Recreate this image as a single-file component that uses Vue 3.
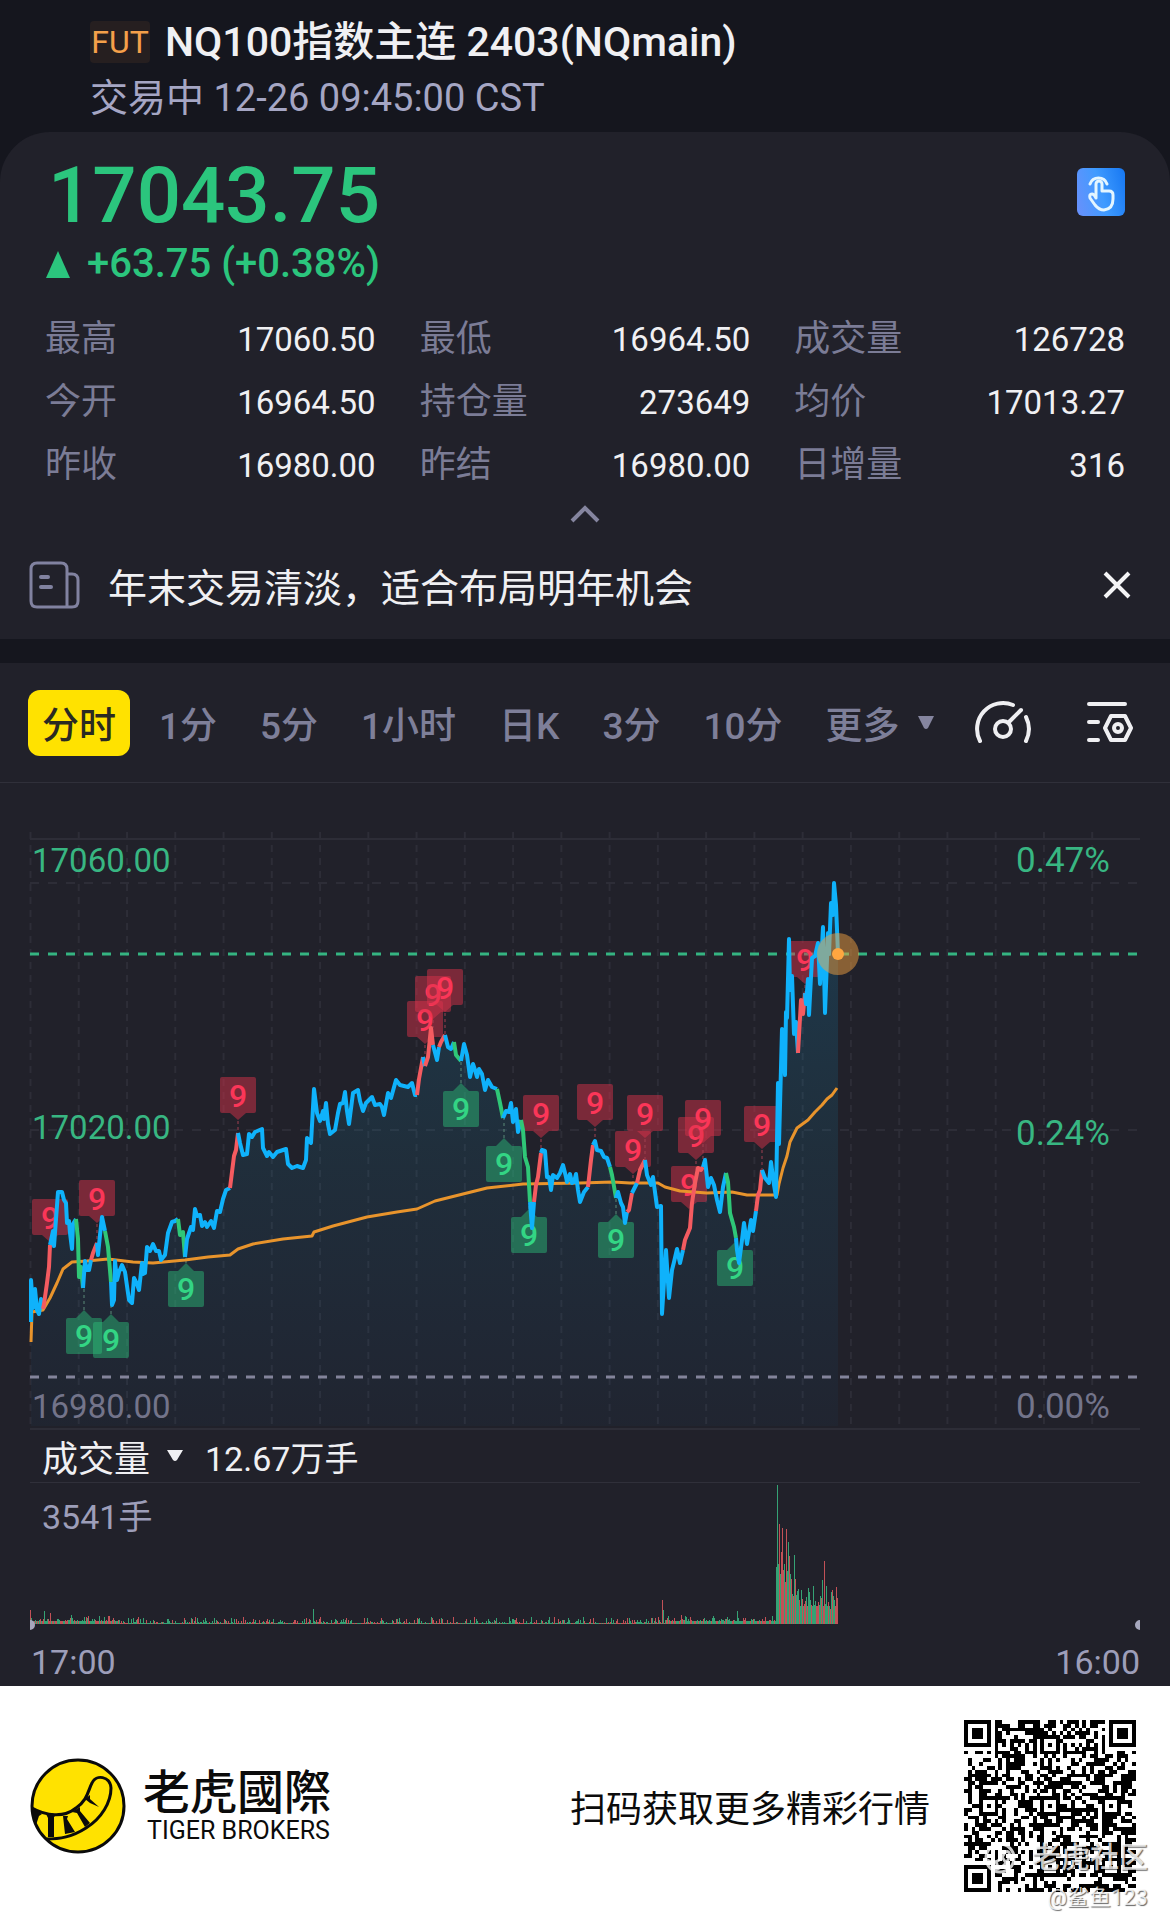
<script setup>
const stats = [
  ['最高', '17060.50'], ['最低', '16964.50'], ['成交量', '126728'],
  ['今开', '16964.50'], ['持仓量', '273649'], ['均价', '17013.27'],
  ['昨收', '16980.00'], ['昨结', '16980.00'], ['日增量', '316'],
]

const periods = ['分时', '1分', '5分', '1小时', '日K', '3分', '10分']

// Price track, split where the trend colour changes: b = neutral, r = rising run, g = falling run
const track = [
  ['b', '31,1322 31,1280 33,1308 35,1289 37,1310 39,1314 41,1299 43,1309'],
  ['r', '44,1304 47,1283 49,1267 50,1245'],
  ['b', '53,1231 54,1246 56,1219 58,1192 62,1192 64,1200 66,1203 67,1223 69,1221 70,1233 72,1249 73,1224 76,1219'],
  ['g', '78,1239 79,1277 81,1267 83,1288'],
  ['b', '85,1261 87,1270 89,1270 91,1260'],
  ['r', '93,1253 97,1243'],
  ['b', '98,1255 100,1235 102,1217 105,1231'],
  ['g', '108,1247 111,1282'],
  ['b', '112,1305 114,1300 115,1261 117,1280 119,1272 122,1265 125,1272 127,1286 129,1300 132,1303 134,1278 137,1284 139,1290 142,1263 143,1274 145,1273 147,1247 150,1251 153,1244 156,1251 159,1251 161,1260 165,1255 168,1233 172,1222 175,1221 178,1219'],
  ['g', '180,1235 183,1232 185,1257'],
  ['b', '187,1239 191,1227 193,1230 195,1209 197,1216 200,1215 202,1226 205,1222 207,1227 211,1221 214,1228 217,1211 220,1212 223,1199 226,1190 230,1188'],
  ['r', '232,1172 234,1156 236,1150 238,1133'],
  ['b', '240,1143 243,1155 247,1154 249,1134 252,1137 255,1132 262,1129 263,1148 267,1156 269,1152 273,1157 277,1152 286,1149 288,1164 292,1168 297,1166 303,1168 306,1160 307,1138 311,1143 314,1089 317,1113 320,1121 323,1111 324,1119 326,1103 328,1124 330,1134 335,1130 338,1113 340,1104 343,1103 345,1092 347,1111 349,1124 353,1093 358,1090 360,1101 363,1111 366,1103 372,1097 375,1105 380,1104 382,1107 384,1115 388,1093 391,1098 396,1080 400,1085 408,1087 412,1083 415,1095 417,1095'],
  ['r', '419,1079 423,1057'],
  ['b', '425,1066'],
  ['r', '428,1057 431,1028 433,1045'],
  ['b', '437,1060 439,1047'],
  ['r', '441,1042 445,1035'],
  ['b', '448,1047 451,1049 454,1042'],
  ['g', '456,1055 461,1061'],
  ['b', '464,1044 467,1055 470,1077 473,1064 475,1070 477,1077 479,1069 482,1074 485,1090 488,1080 492,1087 497,1089'],
  ['g', '500,1103 503,1118'],
  ['b', '506,1111 509,1112 511,1103 513,1122 516,1109 518,1132 521,1120'],
  ['g', '523,1130 525,1157 528,1167 530,1202'],
  ['b', '532,1228 534,1202'],
  ['r', '536,1185 538,1177 541,1153'],
  ['b', '542,1150 545,1151 547,1177 549,1177 551,1190 553,1175 557,1178 560,1173 563,1165 566,1177 567,1182 570,1174 572,1183 574,1182 576,1174 578,1190 580,1202 584,1192 588,1187'],
  ['r', '591,1160 593,1145'],
  ['b', '595,1141 597,1150 601,1151 604,1157 607,1158 610,1167'],
  ['g', '612,1175 616,1198'],
  ['b', '618,1192 621,1203 623,1207 625,1223 627,1212'],
  ['r', '629,1210 632,1193'],
  ['b', '635,1187 637,1183'],
  ['r', '640,1170 645,1160'],
  ['b', '647,1175 651,1185 653,1177 657,1207 661,1206 662,1314 666,1250 669,1298 672,1270 674,1262 677,1249 680,1263 683,1250'],
  ['r', '685,1240 690,1228 692,1203 695,1183 698,1168 701,1170 703,1167'],
  ['b', '705,1160 708,1187 711,1178 714,1185 717,1200 720,1212 723,1187 726,1173'],
  ['g', '728,1182 730,1213 734,1227 736,1238'],
  ['b', '737,1250 739,1263 742,1240 744,1223 747,1244 751,1220 753,1231 756,1211'],
  ['r', '758,1195 760,1190 762,1170'],
  ['b', '765,1178 769,1183 771,1162 774,1185 776,1197 778,1083 779,1144 782,1029 785,1075 786,1012 787,1018 789,939 790,990 792,976 794,1034 796,1022 798,1053'],
  ['r', '800,1018 801,1000 803,1014 805,993'],
  ['b', '806,1004 808,979 809,1015 812,958 815,956 818,943 820,984 823,927 825,1013 828,933 829,954 831,903 833,915 834,883 836,905 838,954'],
]
const segments = track.map(([tone, pts], i) => ({
  tone,
  points: i ? track[i - 1][1].split(' ').pop() + ' ' + pts : pts,
}))
const areaPoints = '31,1426 ' + track.map((t) => t[1]).join(' ') + ' 838,1426'

const average =
  '31,1342 32,1312 43,1310 50,1298 57,1283 63,1269 72,1262 87,1261 108,1259 133,1262 153,1263 185,1260 208,1257 230,1255 238,1249 253,1244 283,1239 312,1236 314,1232 333,1226 367,1217 397,1212 417,1209 435,1201 463,1194 487,1188 523,1184 580,1183 613,1182 630,1183 658,1183 665,1187 680,1191 707,1193 732,1192 747,1195 777,1195 779,1184 783,1168 787,1156 790,1142 797,1128 808,1120 815,1112 822,1105 827,1099 832,1095 837,1088'

// [centre x, box top, y of the point it marks]
const sells = [
  [50, 1199, 1245], [97, 1180, 1243], [238, 1077, 1133], [425, 1001, 1057], [433, 976, 1028],
  [445, 969, 1035], [541, 1095, 1153], [595, 1084, 1141], [633, 1131, 1187], [645, 1095, 1160],
  [689, 1166, 1210], [696, 1117, 1180], [703, 1100, 1165], [762, 1106, 1170], [805, 941, 993],
]
const buys = [
  [84, 1318, 1288], [111, 1322, 1305], [186, 1271, 1257], [461, 1091, 1061],
  [504, 1146, 1118], [529, 1217, 1205], [616, 1222, 1198], [735, 1250, 1238],
]

const gridX = Array.from({ length: 23 }, (_, i) => 30.5 + i * 48.26)

function seeded(seed) {
  let s = seed
  return () => {
    s = (s * 1664525 + 1013904223) % 4294967296
    return s / 4294967296
  }
}

// Volume bars: quiet overnight session, then the opening burst
const peaks = [
  [30, 14], [44, 13], [50, 11], [195, 7], [313, 15], [418, 5], [662, 24], [663, 14], [737, 13],
  [777, 139], [778, 60], [779, 100], [781, 72], [782, 96], [784, 60], [785, 42], [786, 95], [788, 82],
  [789, 68], [791, 45], [792, 30], [794, 69], [795, 45], [797, 33], [799, 24], [801, 34], [804, 20],
  [806, 27], [808, 36], [810, 24], [813, 38], [815, 23], [818, 22], [820, 28], [822, 44], [824, 63],
  [826, 38], [828, 22], [830, 15], [832, 34], [834, 24], [836, 37], [837, 26],
]
const rnd = seeded(17)
const floorAt = (x) => {
  if (x < 118) return 3
  if (x < 665) return 1
  if (x < 776) return 3
  return x < 791 ? 50 : x < 800 ? 28 : 18
}
const bars = Array.from({ length: 808 }, (_, i) => {
  const x = 30 + i
  const peak = peaks.find((p) => p[0] === x)
  const h = peak ? peak[1] : Math.round(floorAt(x) + rnd() ** 4 * (x > 775 ? 16 : 6))
  return { x, h, up: rnd() > 0.45 || x === 777 }
})

// 45-module code with finder, timing and alignment patterns
const N = 45
const bit = seeded(2403)
const cells = Array.from({ length: N }, () => Array.from({ length: N }, () => bit() > 0.48))
const square = (cx, cy, r, skip) => {
  for (let y = -r; y <= r; y++)
    for (let x = -r; x <= r; x++) {
      if (cells[cy + y]?.[cx + x] === undefined) continue
      const ring = Math.max(Math.abs(x), Math.abs(y))
      cells[cy + y][cx + x] = ring !== skip && ring < 4
    }
}
for (let i = 0; i < N; i++) cells[6][i] = cells[i][6] = i % 2 === 0
for (const [x, y] of [[3, 3], [N - 4, 3], [3, N - 4]]) square(x, y, 4, 2)
for (const [x, y] of [[22, 6], [6, 22], [22, 22], [38, 22], [22, 38], [38, 38]]) square(x, y, 2, 1)
const qrPath = cells
  .map((row, y) => row.map((on, x) => (on ? `M${x} ${y}h1v1h-1z` : '')).join(''))
  .join('')
</script>

<template>
  <main class="page">
    <header class="head">
      <h1 class="title"><span class="tag">FUT</span>NQ100指数主连 2403(NQmain)</h1>
      <p class="status">交易中 12-26 09:45:00 CST</p>
    </header>

    <section class="quote">
      <div class="quote-top">
        <div>
          <div class="price">17043.75</div>
          <div class="change">
            <svg width="24" height="28" viewBox="0 0 24 28"><path d="M12 1 24 28H0z" fill="#2bc57d" /></svg>
            <span>+63.75 (+0.38%)</span>
          </div>
        </div>
        <button class="touch" aria-label="点击交易">
          <svg width="48" height="48" viewBox="0 0 48 48" fill="none" stroke="#e4f6ff" stroke-width="3" stroke-linecap="round" stroke-linejoin="round">
            <path d="M13 16a9 9 0 0 1 17 0" />
            <path d="M19 30V16a3 3 0 0 1 6 0v7h7q4 0 4 4v4q0 10-9 11-5 0-9-5l-5-7q-1-4 2-4 2 0 4 4" />
          </svg>
        </button>
      </div>

      <dl class="stats">
        <div v-for="s in stats" :key="s[0]" class="stat">
          <dt>{{ s[0] }}</dt>
          <dd>{{ s[1] }}</dd>
        </div>
      </dl>

      <button class="fold" aria-label="收起">
        <svg width="30" height="18" viewBox="0 0 30 18"><path d="M2 16 15 3l13 13" fill="none" stroke="#85859f" stroke-width="4" /></svg>
      </button>

      <div class="news">
        <svg width="52" height="50" viewBox="0 0 52 50" fill="none" stroke="#8182a0" stroke-width="4" stroke-linecap="round">
          <path d="M39 46V9q0-6-6-6H9Q3 3 3 9v32q0 6 6 6h35q6 0 6-6V20q0-6-6-6h-4M39 16v22" stroke-width="3" />
          <path d="M13 17h7M13 27h10" />
        </svg>
        <a class="news-text" href="#">年末交易清淡，适合布局明年机会</a>
        <button class="close" aria-label="关闭">
          <svg width="28" height="28" viewBox="0 0 28 28"><path d="m2 2 24 24M26 2 2 26" stroke="#f4f4f6" stroke-width="4" /></svg>
        </button>
      </div>
    </section>

    <section class="board">
      <nav class="tools">
        <button v-for="(p, i) in periods" :key="p" class="tab" :class="{ active: i === 0 }">{{ p }}</button>
        <button class="tab more">
          更多
          <svg width="16" height="14" viewBox="0 0 16 14"><path d="M0 0h16L10 12q-2 2-4 0z" fill="#85859f" /></svg>
        </button>
        <div class="icons">
          <button aria-label="指标">
            <svg width="56" height="44" viewBox="0 0 56 44" fill="none" stroke="#efeff2" stroke-width="4" stroke-linecap="round">
              <path d="M5 40A26 26 0 0 1 38 4M51 16a27 27 0 0 1 0 24" />
              <circle cx="28" cy="28" r="8" />
              <path d="m34 21 12-12" />
            </svg>
          </button>
          <button aria-label="设置">
            <svg width="46" height="44" viewBox="0 0 46 44" fill="none" stroke="#efeff2" stroke-width="4" stroke-linecap="round" stroke-linejoin="round">
              <path d="M2 3h36M2 21h9M2 39h9" />
              <path d="M18 27 24 15h14l6 12-6 12H24z" />
              <circle cx="31" cy="27" r="4" />
            </svg>
          </button>
        </div>
      </nav>

      <svg class="chart" viewBox="0 783 1170 647" role="img" aria-label="分时走势">
        <defs>
          <linearGradient id="fade" gradientUnits="userSpaceOnUse" x1="0" y1="883" x2="0" y2="1426">
            <stop offset="0" stop-color="#0ab4ff" stop-opacity="0.17" />
            <stop offset="0.5" stop-color="#14a8d8" stop-opacity="0.1" />
            <stop offset="1" stop-color="#0a9aff" stop-opacity="0.03" />
          </linearGradient>
        </defs>

        <g stroke="#2d2d37" stroke-width="2">
          <path v-for="x in gridX" :key="x" :d="`M${x} 832V1426`" stroke-dasharray="7 6" />
          <path d="M30 883H1140M30 1130H1140" stroke-dasharray="9 9" />
          <path d="M30 839H1140M30 1429H1140" />
        </g>
        <polygon :points="areaPoints" fill="url(#fade)" />

        <g class="axis">
          <text x="32" y="872">17060.00</text>
          <text x="32" y="1139">17020.00</text>
          <text x="32" y="1418" class="dim">16980.00</text>
        </g>
        <g class="axis rate">
          <text x="1016" y="872">0.47%</text>
          <text x="1016" y="1145">0.24%</text>
          <text x="1016" y="1418" class="dim">0.00%</text>
        </g>

        <path d="M30 954H1140" stroke="#35b481" stroke-width="3" stroke-dasharray="9 9" />
        <path d="M30 1377H1140" stroke="#83849b" stroke-width="3" stroke-dasharray="9 9" />

        <g v-for="m in sells" :key="'s' + m[0]" class="mark sell">
          <path class="lead" :d="`M${m[0]} ${m[1] + 44}V${m[2]}`" />
          <path class="box" :d="`M${m[0] - 16} ${m[1]}h32q2 0 2 2v32q0 2-2 2h-8l-8 7-8-7h-8q-2 0-2-2v-32q0-2 2-2z`" />
          <text :x="m[0]" :y="m[1] + 30">9</text>
        </g>
        <g v-for="m in buys" :key="'b' + m[0]" class="mark buy">
          <path class="lead" :d="`M${m[0]} ${m[1] - 8}V${m[2]}`" />
          <path class="box" :d="`M${m[0] - 16} ${m[1]}h8l8-8 8 8h8q2 0 2 2v32q0 2-2 2h-32q-2 0-2-2v-32q0-2 2-2z`" />
          <text :x="m[0]" :y="m[1] + 29">9</text>
        </g>

        <polyline :points="average" class="avg" />
        <polyline v-for="(s, i) in segments" :key="i" :points="s.points" class="line" :class="s.tone" />
        <circle cx="838" cy="954" r="21" fill="#f0a040" fill-opacity="0.5" />
        <circle cx="838" cy="954" r="6" fill="#ffa640" />
      </svg>

      <div class="volume-head">
        <button class="volume-pick">
          成交量
          <svg width="16" height="12" viewBox="0 0 16 12"><path d="M0 0h16l-6 10q-2 2-4 0z" fill="#f0f0f3" /></svg>
        </button>
        <span>12.67万手</span>
      </div>

      <svg class="chart" viewBox="0 1483 1170 150" role="img" aria-label="成交量">
        <text x="42" y="1529" class="unit">3541手</text>
        <rect v-for="b in bars" :key="b.x" :x="b.x" :y="1624 - b.h" width="1" :height="b.h" :fill="b.up ? '#35a274' : '#c25157'" />
        <path d="M30 1620a5 5 0 0 1 0 10zM1140 1620a5 5 0 0 0 0 10z" fill="#a6a7bd" />
      </svg>

      <div class="times"><span>17:00</span><span>16:00</span></div>
    </section>

    <footer class="foot">
      <svg width="96" height="96" viewBox="0 0 96 96">
        <circle cx="48" cy="48" r="46" fill="#ffe200" stroke="#0b0b0b" stroke-width="3" />
        <path d="M2 50C16 58 34 60 46 50 58 42 58 32 62 25 66 16 80 18 81 30 81 44 72 60 56 70 42 79 30 81 16 81" fill="none" stroke="#0b0b0b" stroke-width="3" />
        <path d="M2 50 12 56 9 58 6 67zM16 56h11l-3 3v20h-6v-19zM33 58h5l-1 3 8 13-10 2zM42 54l8-5v4l10 12-5 4-8-14zM55 41l5-4v4l9 8-9-4z" fill="#0b0b0b" />
      </svg>
      <div class="brand">
        <strong>老虎國際</strong>
        <span>TIGER BROKERS</span>
      </div>
      <p class="scan">扫码获取更多精彩行情</p>
      <div class="qr">
        <svg width="172" height="172" viewBox="0 0 45 45" shape-rendering="crispEdges" role="img" aria-label="二维码"><path :d="qrPath" fill="#000" /></svg>
        <div class="stamp">
          <div class="stamp-name">
            <svg width="32" height="32" viewBox="0 0 32 32" fill="none" stroke="#fff" stroke-width="3"><circle cx="16" cy="16" r="14" /><path d="M3 18q12 6 18-8 6-2 4 6-4 10-16 12M12 19l2 7M18 15l4 6" /></svg>
            <span>老虎社区</span>
          </div>
          <span class="stamp-user">@鲨鱼123</span>
        </div>
      </div>
    </footer>
  </main>
</template>

<style>
body {
  background: #15161e;
}
</style>

<style scoped>
.page {
  font-family: Roboto, "Noto Sans CJK SC", sans-serif;
  background: #15161e;
  color: #f0f0f3;
}
h1, p, dl, dd {
  margin: 0;
}
svg {
  display: block;
  flex: none;
}
button {
  padding: 0;
  border: 0;
  background: none;
  color: inherit;
  font: inherit;
}
.head {
  padding: 14px 90px 6px;
  white-space: nowrap;
}
.title {
  display: flex;
  align-items: center;
  gap: 15px;
  font-size: 41px;
  font-weight: 500;
  line-height: 56px;
}
.tag {
  width: 60px;
  border-radius: 4px;
  background: #261f20;
  color: #f5a04a;
  font-size: 32px;
  font-weight: 400;
  line-height: 42px;
  text-align: center;
}
.status {
  color: #a5a6c4;
  font-size: 38px;
  line-height: 56px;
}
.quote {
  padding-top: 24px;
  border-radius: 50px 50px 0 0;
  background: #21212a;
}
.quote-top {
  display: flex;
  justify-content: space-between;
  align-items: flex-start;
  padding: 0 45px 0 46px;
  color: #2bc57d;
}
.price {
  padding-left: 2px;
  font-size: 78px;
  font-weight: 500;
  line-height: 80px;
}
.change {
  display: flex;
  align-items: center;
  gap: 17px;
  margin-top: 4px;
  font-size: 40px;
  font-weight: 500;
  line-height: 48px;
}
.touch {
  margin-top: 12px;
  border-radius: 6px;
  background: linear-gradient(75deg, #6a90fb, #3f9bff 50%, #1677f2);
}
.stats {
  display: grid;
  grid-template-columns: repeat(3, 1fr);
  column-gap: 44px;
  margin-top: 20px;
  padding: 0 45px;
  line-height: 63px;
}
.stat {
  display: flex;
  justify-content: space-between;
}
dt {
  color: #7b7c96;
  font-size: 36px;
}
dd {
  font-size: 33px;
}
.fold {
  display: flex;
  align-items: center;
  justify-content: center;
  width: 100%;
  height: 34px;
}
.news {
  display: flex;
  align-items: center;
  height: 108px;
  padding: 0 39px 0 28px;
}
.news-text {
  flex: 1;
  margin-left: 28px;
  color: inherit;
  font-size: 39px;
  text-decoration: none;
}
.board {
  margin-top: 24px;
  background: #21212a;
}
.tools {
  display: flex;
  align-items: center;
  gap: 15px;
  height: 119px;
  padding: 0 37px 0 28px;
  border-bottom: 1px solid #30303a;
}
.tab {
  height: 66px;
  padding: 0 14px;
  border-radius: 12px;
  color: #7e7f99;
  font-size: 37px;
  font-weight: 500;
  white-space: nowrap;
}
.tab.active {
  background: #ffe200;
  color: #2a2a22;
}
.more {
  display: flex;
  align-items: center;
  gap: 18px;
}
.icons {
  display: flex;
  gap: 56px;
  margin-left: auto;
}
.chart {
  width: 100%;
}
.axis {
  fill: #38b682;
  font-size: 33px;
}
.rate {
  font-size: 35px;
}
.dim {
  fill: #73748a;
}
.unit {
  fill: #9d9eb9;
  font-size: 34px;
}
.line, .avg {
  fill: none;
  stroke-width: 4;
  stroke-linejoin: round;
}
.avg {
  stroke: #e8942c;
  stroke-width: 3;
}
.b { stroke: #0fb2fb; }
.r { stroke: #f45b60; }
.g { stroke: #2fc777; }
.mark text {
  font-size: 32px;
  font-weight: 500;
  text-anchor: middle;
}
.lead {
  stroke-width: 1;
  stroke-dasharray: 3 3;
}
.sell .box { fill: rgba(220, 50, 75, 0.48); }
.sell text { fill: #fb3658; }
.sell .lead { stroke: #a04050; }
.buy .box { fill: rgba(44, 185, 120, 0.48); }
.buy text { fill: #33d584; }
.buy .lead { stroke: #5a8a78; }
.volume-head {
  display: flex;
  align-items: center;
  gap: 22px;
  height: 52px;
  margin: 0 30px;
  padding-left: 12px;
  border-bottom: 1px solid #30303a;
  font-size: 34px;
}
.volume-pick {
  display: flex;
  align-items: center;
  gap: 17px;
  font-size: 36px;
}
.times {
  display: flex;
  justify-content: space-between;
  padding: 5px 30px 0 31px;
  color: #9d9eb9;
  font-size: 34px;
  line-height: 48px;
}
.foot {
  display: flex;
  align-items: center;
  height: 240px;
  padding: 0 34px 0 30px;
  background: #fff;
  color: #0b0b0b;
}
.brand {
  display: flex;
  flex-direction: column;
  margin-left: 17px;
}
.brand strong {
  font-family: "Noto Sans CJK TC", sans-serif;
  font-size: 47px;
  font-weight: 500;
  line-height: 50px;
}
.brand span {
  padding-left: 4px;
  font-size: 25px;
  line-height: 34px;
}
.scan {
  margin-left: auto;
  font-size: 36px;
}
.qr {
  position: relative;
  margin-left: 34px;
}
.stamp {
  position: absolute;
  top: 118px;
  right: -12px;
  display: flex;
  flex-direction: column;
  align-items: flex-end;
  color: rgba(255, 255, 255, 0.8);
  text-shadow: 1px 1px 1px rgba(0, 0, 0, 0.6);
  white-space: nowrap;
}
.stamp-name {
  display: flex;
  align-items: center;
  gap: 16px;
  font-size: 29px;
  font-weight: 500;
  line-height: 40px;
}
.stamp-name svg {
  opacity: 0.8;
}
.stamp-user {
  font-size: 22px;
  line-height: 40px;
}
</style>
